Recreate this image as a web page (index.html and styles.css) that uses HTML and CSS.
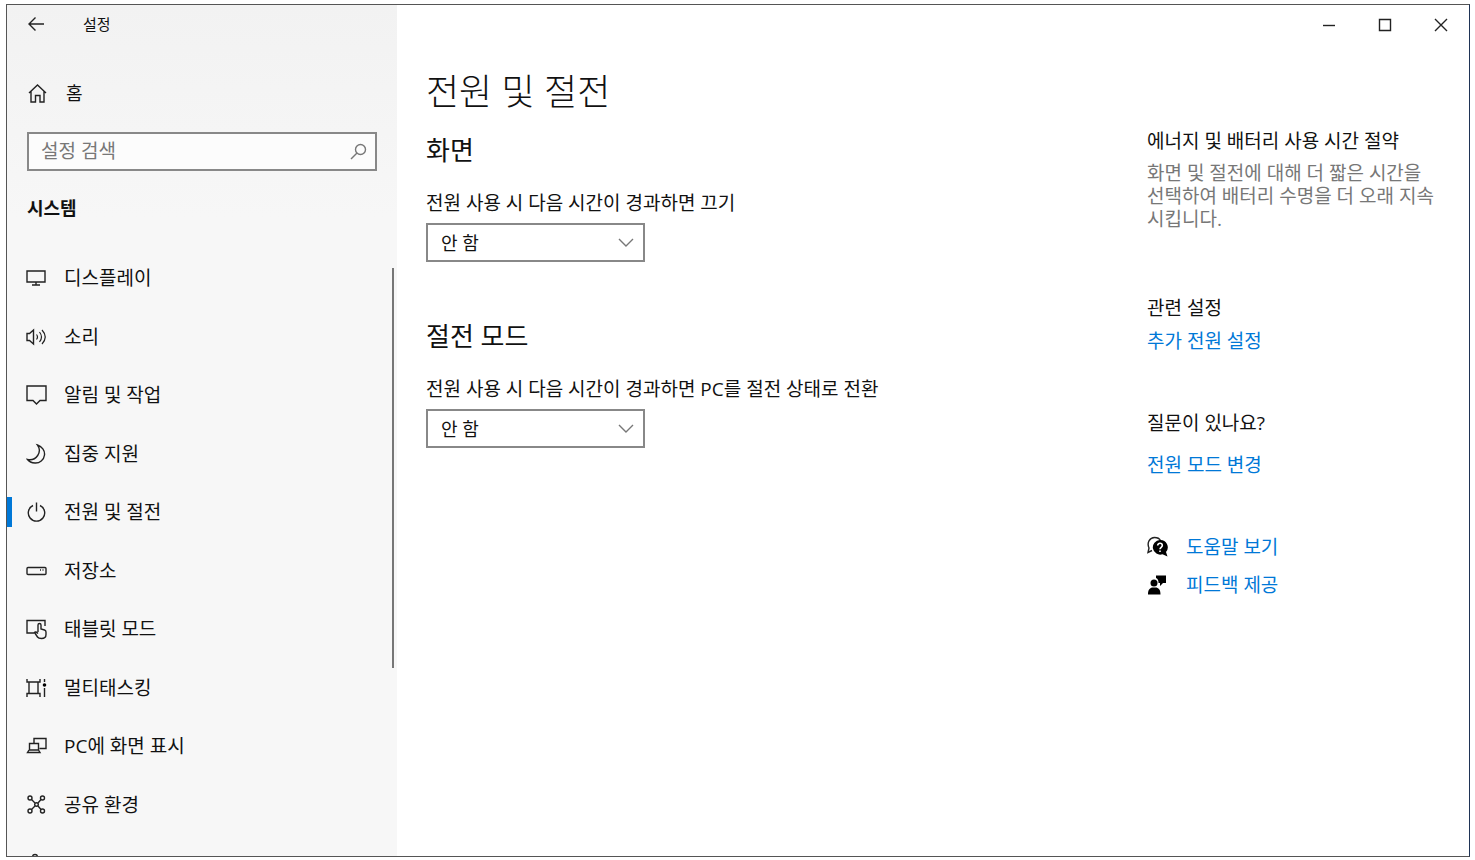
FILE: index.html
```html
<!DOCTYPE html>
<html lang="ko">
<head>
  <meta charset="UTF-8">
  <title>설정</title>
  <link rel="stylesheet" href="styles.css">
</head>
<body>

<div class="window">

  <div class="sidebar">
    <div class="titlebar">
      <button class="back" aria-label="뒤로">
        <svg width="18" height="18" viewBox="0 0 18 18"><path d="M17 9H2M8.500 2.500L2 9l6.500 6.500"/></svg>
      </button>
      <span>설정</span>
    </div>

    <a class="home" href="#">
      <svg width="22" height="22" viewBox="0 0 22 22"><path d="M2 11L10.500 3l8.500 8M4 9.500v10.500H8.500v-6.500h4.500V20h4V9.500"/></svg>
      홈
    </a>

    <div class="search">
      <input type="text" placeholder="설정 검색" aria-label="설정 검색">
      <svg width="18" height="18" viewBox="0 0 18 18"><circle cx="11.500" cy="6.500" r="5"/><path d="M8 10L2 16"/></svg>
    </div>

    <h2 class="group">시스템</h2>

    <nav class="nav">
      <ul>
        <li><a href="#">
          <svg width="22" height="22" viewBox="0 0 22 22"><path d="M1 4h18v11H1zM10 15v3M6 18h8"/></svg>
          디스플레이</a></li>
        <li><a href="#">
          <svg width="22" height="22" viewBox="0 0 22 22"><path d="M1 7.500h2.500L7.500 4v14l-4-3.500H1z"/><path class="thin" d="M10.500 8.500q2 2.500 0 5M13.500 6q4 5 0 10M16 4q6.500 7 0 14"/></svg>
          소리</a></li>
        <li><a href="#">
          <svg width="22" height="22" viewBox="0 0 22 22"><path d="M1 2h19v14.500h-6l-3.500 3.500L7 16.500H1z"/></svg>
          알림 및 작업</a></li>
        <li><a href="#">
          <svg width="22" height="22" viewBox="0 0 22 22"><path d="M11.500 2C16 3.500 19 7.500 18.500 12c-.5 5-5 8.300-9.500 8-3.300-.2-6-1.500-7.500-3.500 4 .7 8-.7 10.200-4 2.200-3.400 2-7.500-.2-10.500z"/></svg>
          집중 지원</a></li>
        <li class="active"><a href="#">
          <svg width="22" height="22" viewBox="0 0 22 22"><path d="M7 4.500a8.200 8.200 0 1 0 7 0M10.500 1.500v9"/></svg>
          전원 및 절전</a></li>
        <li><a href="#">
          <svg width="22" height="22" viewBox="0 0 22 22"><rect x="1" y="7.500" width="19" height="7" rx="1"/><path d="M14 10h1M16.500 10h1"/></svg>
          저장소</a></li>
        <li><a href="#">
          <svg width="22" height="22" viewBox="0 0 22 22"><path d="M8.500 15H1V2.500h18V8"/><path d="M12 14V7c0-2 3-2 3 0v4l3.500 1q1.500.5 1.500 2v2.500q0 4-4.500 4-3 0-4-1.500l-3-4.500q1-1.500 3.500 1"/></svg>
          태블릿 모드</a></li>
        <li><a href="#">
          <svg width="22" height="22" viewBox="0 0 22 22"><path d="M1 2v3h13V2M1 20v-3.500h13V20M3 5v11.500M12 5v11.500M18.500 2v3M18.500 11v9"/><circle class="fill" cx="18.500" cy="8" r="1.800"/></svg>
          멀티태스킹</a></li>
        <li><a href="#">
          <svg width="22" height="22" viewBox="0 0 22 22"><path d="M8 8V3.500h12v10h-6.500M3.500 8.500h9V15h-9zM3 15l-1.500 2.500h12.500L12.500 15"/></svg>
          PC에 화면 표시</a></li>
        <li><a href="#">
          <svg width="22" height="22" viewBox="0 0 22 22"><circle cx="4" cy="4" r="2"/><circle cx="16.500" cy="4" r="2"/><circle cx="4" cy="17" r="2"/><circle cx="16.500" cy="17" r="2"/><circle cx="10.500" cy="10.500" r="1.800"/><path d="M5.500 5.500L9 9M15 5.500l-3 3.500M5.500 15.500L9 12M15 15.500L12 12"/></svg>
          공유 환경</a></li>
        <li><a href="#" aria-label="클립보드">
          <svg width="22" height="22" viewBox="0 0 22 22"><path d="M6.500 5a2.500 2.500 0 0 1 5 0M6.500 5H2v15h15V5h-5.500"/></svg>
        </a></li>
      </ul>
      <div class="scrollbar"></div>
    </nav>
  </div>

  <div class="content">
    <div class="controls">
      <button aria-label="최소화"><svg width="14" height="14" viewBox="0 0 14 14"><path d="M1 7.500h12"/></svg></button>
      <button aria-label="최대화"><svg width="14" height="14" viewBox="0 0 14 14"><path d="M1.500 1.500h11v11h-11z"/></svg></button>
      <button aria-label="닫기"><svg width="14" height="14" viewBox="0 0 14 14"><path d="M1 1l12 12M13 1L1 13"/></svg></button>
    </div>

    <div class="columns">
      <main>
        <h1>전원 및 절전</h1>

        <section class="setting">
          <h2>화면</h2>
          <label for="screen">전원 사용 시 다음 시간이 경과하면 끄기</label>
          <div class="dropdown">
            <select id="screen"><option>안 함</option></select>
            <svg width="16" height="10" viewBox="0 0 16 10"><path d="M1 1l7 7 7-7"/></svg>
          </div>
        </section>

        <section class="setting">
          <h2>절전 모드</h2>
          <label for="sleep">전원 사용 시 다음 시간이 경과하면 PC를 절전 상태로 전환</label>
          <div class="dropdown">
            <select id="sleep"><option>안 함</option></select>
            <svg width="16" height="10" viewBox="0 0 16 10"><path d="M1 1l7 7 7-7"/></svg>
          </div>
        </section>
      </main>

      <aside>
        <section class="tip">
          <h3>에너지 및 배터리 사용 시간 절약</h3>
          <p>화면 및 절전에 대해 더 짧은 시간을 선택하여 배터리 수명을 더 오래 지속시킵니다.</p>
        </section>

        <section class="related">
          <h3>관련 설정</h3>
          <a href="#">추가 전원 설정</a>
        </section>

        <section class="question">
          <h3>질문이 있나요?</h3>
          <a href="#">전원 모드 변경</a>
        </section>

        <div class="support">
          <a href="#">
            <svg width="22" height="22" viewBox="0 0 22 22"><path d="M5 14.500L1 16.500l1-4.500C-.5 6.500 3 1.500 7.500 1.500c3 0 5 1 6 3"/><path class="fill" d="M13 4a7.300 7.300 0 1 0 2.500 14.200l5 2.300-1.500-4.500A7.300 7.300 0 0 0 13 4z"/><path class="mark" d="M10.700 9.500c0-3 4.600-2.800 4.600 0 0 1.700-2.300 1.900-2.300 3.700M13 14.500V16"/></svg>
            도움말 보기
          </a>
          <a href="#">
            <svg width="22" height="22" viewBox="0 0 22 22"><circle class="fill" cx="7" cy="9" r="3.500"/><path class="fill" d="M1 20.500c0-5 2-7 5-7h2.500c3 0 5 2 5 7zM9 1.500h10V9h-3l-3 3V9h-1.500c0-2.500-.5-4-2.500-5z"/></svg>
            피드백 제공
          </a>
        </div>
      </aside>
    </div>
  </div>

</div>

</body>
</html>
```
FILE: styles.css
```css
* { box-sizing: border-box; }
body {
  margin: 0;
  padding: 4px 5px 3px 6px;
  height: 100vh;
  background: #fff;
  color: #111;
  font-family: "Open Sans", "Noto Sans CJK KR", sans-serif;
  font-size: 19px;
  line-height: 24px;
}
h1, h2, h3, p, ul { margin: 0; padding: 0; font-size: inherit; font-weight: normal; }
ul { list-style: none; }
a { color: #0078d7; text-decoration: none; }
button { padding: 0; border: none; background: none; }
svg { flex: none; display: block; fill: none; stroke: #222; stroke-width: 1.4; }
svg .thin { stroke-width: 1.2; }
svg .fill { fill: #000; stroke: none; }
svg .mark { stroke: #fff; stroke-width: 1.6; }

.window {
  display: flex;
  height: 100%;
  border: 1px solid #555;
  border-right-color: #1f3355;
  overflow: hidden;
}

/* sidebar */
.sidebar {
  flex: 0 0 390px;
  display: flex;
  flex-direction: column;
  background: linear-gradient(#f2f2f2, #f7f7f7 25%);
}
.titlebar { display: flex; align-items: center; height: 38px; padding-left: 20px; font-size: 15px; }
.back { width: 56px; }
.home { display: flex; align-items: center; gap: 17px; height: 48px; margin-top: 26px; padding-left: 20px; color: #111; font-size: 18px; }
.search { display: flex; align-items: center; height: 39px; margin: 15px 20px 0; padding-right: 8px; border: 2px solid #888; background: #fcfcfc; }
.search input { flex: 1; min-width: 0; padding: 0 12px 2px; border: none; outline: none; background: none; font: inherit; }
.search input::placeholder { color: #777; }
.search svg { stroke: #777; }
.group { margin: 25px 20px 0; font-size: 18px; font-weight: bold; }
.nav { flex: 1; display: flex; justify-content: space-between; min-height: 0; margin-top: 29px; }
.nav ul { flex: 1; display: grid; grid-template-rows: repeat(10, 1fr) 22px; }
.nav li { display: flex; align-items: center; min-height: 58px; }
.nav a { display: flex; align-items: center; gap: 16px; height: 30px; padding-left: 19px; color: #111; }
.nav .active a { padding-left: 14px; border-left: 5px solid #0078d7; }
.scrollbar { width: 2px; height: 400px; margin: 19px 3px 0 0; background: #777; }

/* content */
.content { flex: 1; display: flex; flex-direction: column; }
.controls { display: flex; justify-content: flex-end; height: 40px; }
.controls button { display: grid; place-items: center; width: 56px; }
.columns { flex: 1; display: flex; }
main { flex: 1; padding: 23px 0 0 29px; }
h1 { font-size: 36px; font-weight: 300; line-height: 48px; }
.setting { margin-bottom: 56px; }
.setting h2 { padding-top: 16px; font-size: 26px; line-height: 36px; }
.setting label { display: block; margin: 23px 0 8px; }
.setting + .setting h2 { padding-top: 0; }
.dropdown { display: grid; align-items: center; width: 219px; }
.dropdown select, .dropdown svg { grid-area: 1 / 1; }
.dropdown select { appearance: none; height: 39px; padding: 0 13px; border: 2px solid #888; border-radius: 0; background: #fff; color: #111; font: inherit; font-size: 18px; }
.dropdown svg { justify-self: end; margin-right: 11px; stroke: #777; pointer-events: none; }

aside { flex: 0 0 322px; padding: 84px 32px 0 0; }
aside section a { display: block; }
.tip p { margin-top: 9px; color: #777; line-height: 23px; }
.related { margin-top: 65px; }
.related a { margin-top: 9px; }
.question { margin-top: 58px; }
.question a { margin-top: 18px; }
.support { margin-top: 58px; }
.support a { display: flex; align-items: center; gap: 17px; margin-bottom: 14px; }
```
